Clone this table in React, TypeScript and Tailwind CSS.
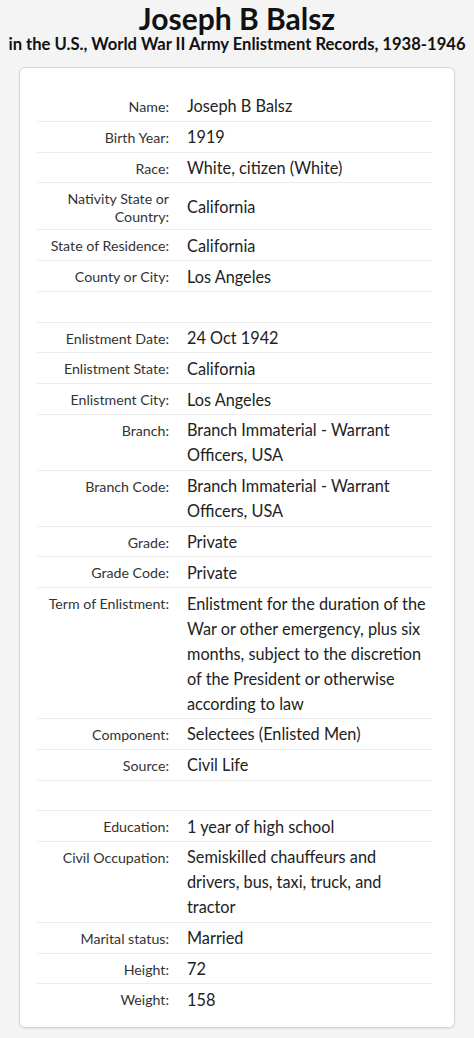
import React from "react";

type Row = { label?: string; value?: React.ReactNode };

const rows: Row[] = [
  { label: "Name:", value: "Joseph B Balsz" },
  { label: "Birth Year:", value: "1919" },
  { label: "Race:", value: "White, citizen (White)" },
  { label: "Nativity State or Country:", value: "California" },
  { label: "State of Residence:", value: "California" },
  { label: "County or City:", value: "Los Angeles" },
  {},
  { label: "Enlistment Date:", value: "24 Oct 1942" },
  { label: "Enlistment State:", value: "California" },
  { label: "Enlistment City:", value: "Los Angeles" },
  { label: "Branch:", value: <>Branch Immaterial - Warrant<br />Officers, USA</> },
  { label: "Branch Code:", value: <>Branch Immaterial - Warrant<br />Officers, USA</> },
  { label: "Grade:", value: "Private" },
  { label: "Grade Code:", value: "Private" },
  {
    label: "Term of Enlistment:",
    value: (
      <>
        Enlistment for the duration of the<br />War or other emergency, plus six<br />months, subject to the discretion<br />of the President or otherwise<br />according to law
      </>
    ),
  },
  { label: "Component:", value: "Selectees (Enlisted Men)" },
  { label: "Source:", value: "Civil Life" },
  {},
  { label: "Education:", value: "1 year of high school" },
  {
    label: "Civil Occupation:",
    value: <>Semiskilled chauffeurs and<br />drivers, bus, taxi, truck, and<br />tractor</>,
  },
  { label: "Marital status:", value: "Married" },
  { label: "Height:", value: "72" },
  { label: "Weight:", value: "158" },
];

export default function App() {
  return (
    <div
      className="min-h-[1038px] w-[474px] bg-[#f4f4f4] text-[#333]"
      style={{ fontFamily: "Lato, 'Noto Sans', sans-serif" }}
    >
      <div className="pt-[3px] text-center">
        <h1 className="text-[30px] font-bold leading-[30px] text-[#111]">Joseph B Balsz</h1>
        <h2 className="mt-[3px] whitespace-nowrap text-[16.6px] font-bold leading-[16px] text-[#111]">
          in the U.S., World War II Army Enlistment Records, 1938-1946
        </h2>
      </div>
      <div className="mx-[19px] mt-[15px] rounded-[6px] border border-[#d6d6d6] bg-white pb-[13px] pl-[17px] pr-[21px] pt-[23px] shadow-[0_1px_2px_rgba(0,0,0,0.08)]">
        {rows.map((r, i) => (
          <div
            key={i}
            className={`grid grid-cols-[132px_1fr] gap-x-[18px] ${i < rows.length - 1 ? "border-b border-[#ececec]" : ""}`}
          >
            <div className="pb-[3px] pt-[7px] text-right text-[14.2px] leading-[18px] text-[#333]">
              {r.label ?? "\u00a0"}
            </div>
            <div className="self-center py-[2.4px] text-[16.3px] leading-[25px] text-[#222]">
              {r.value ?? "\u00a0"}
            </div>
          </div>
        ))}
      </div>
    </div>
  );
}
